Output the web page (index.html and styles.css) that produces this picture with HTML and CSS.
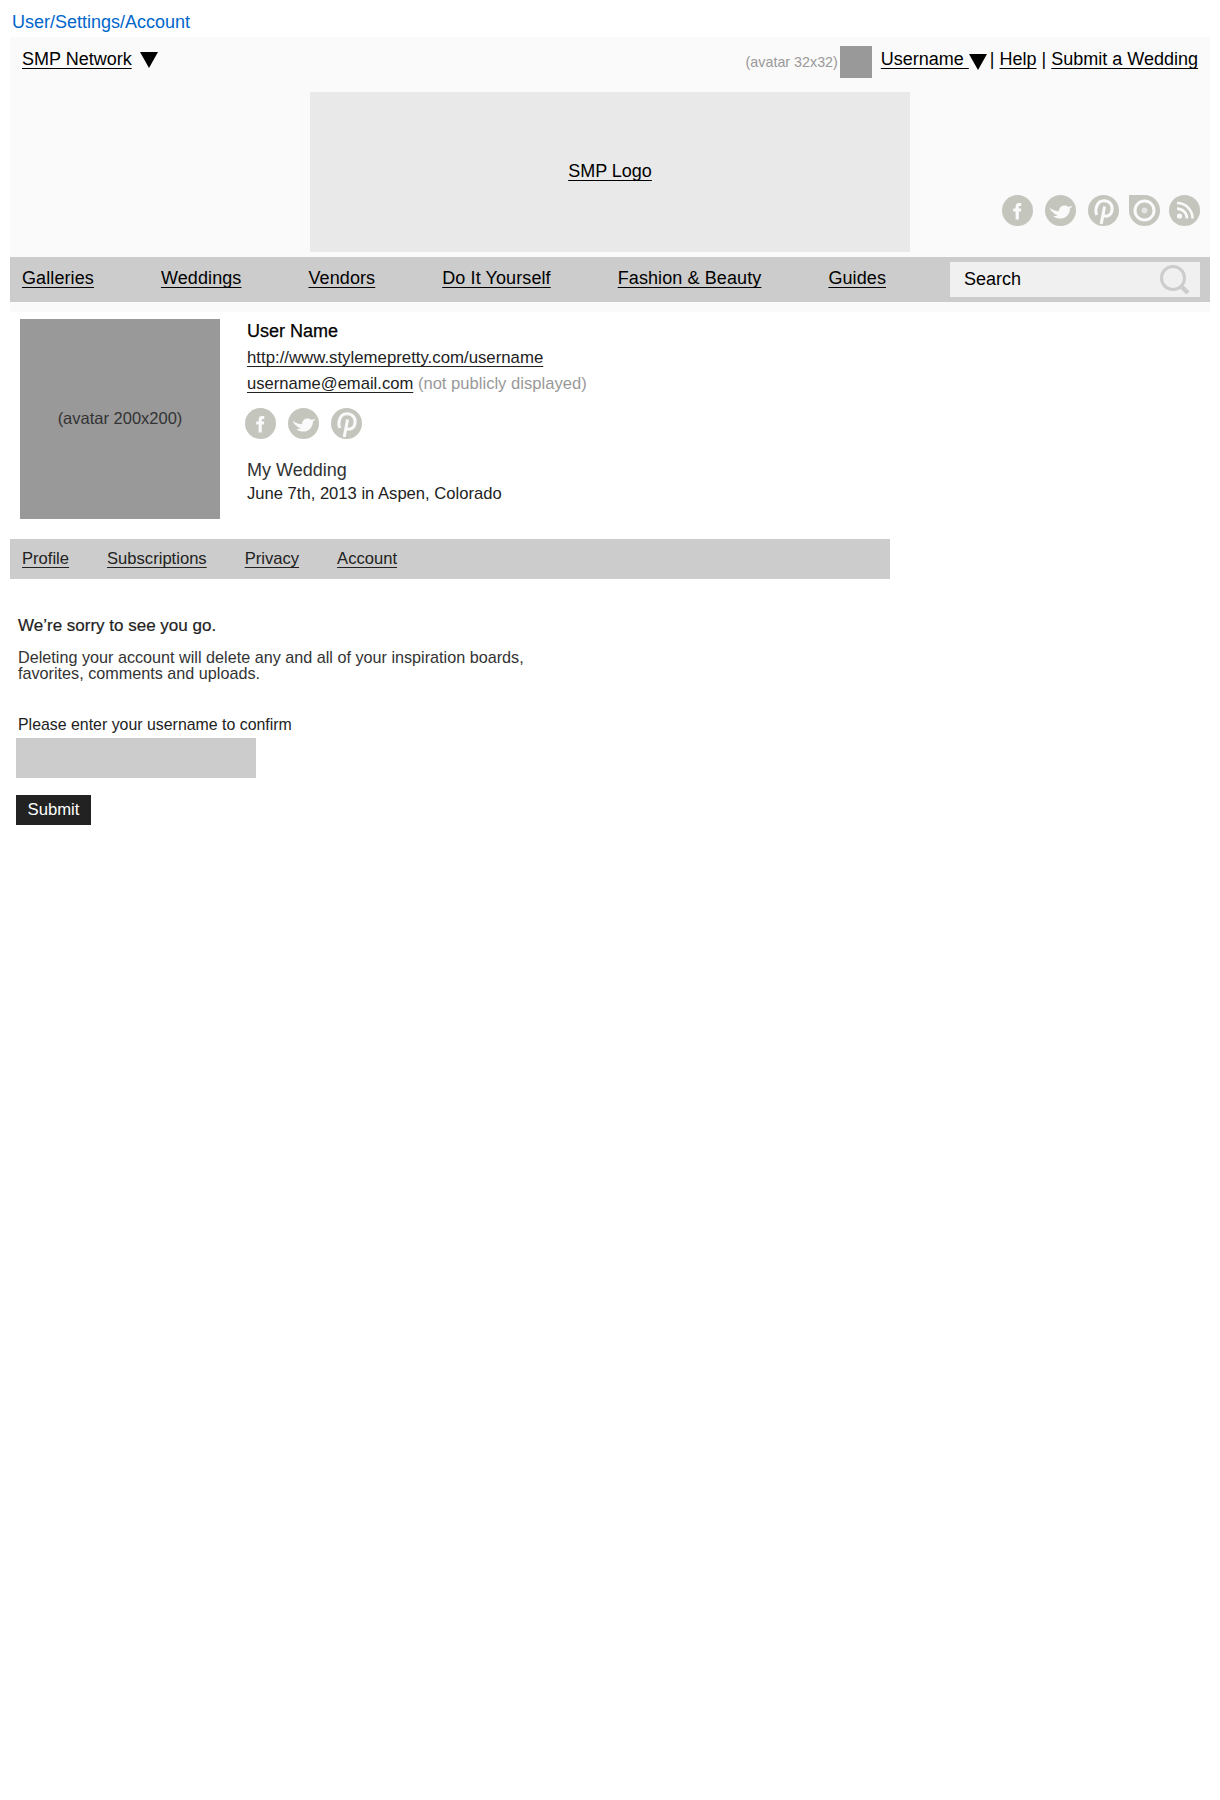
FILE: index.html
```html
<!DOCTYPE html>
<html lang="en">
<head>
    <meta charset="UTF-8">
    <meta name="viewport" content="width=device-width, initial-scale=1.0">
    <title>User/Settings/Account</title>
    <link rel="stylesheet" href="styles.css">
</head>
<body>
    <svg class="icon-defs" xmlns="http://www.w3.org/2000/svg">
        <symbol id="i-facebook" viewBox="0 0 31 31">
            <circle cx="15.5" cy="15.5" r="15.5" fill="#c4c5bd"/>
            <path fill="#fafafa" d="M13.6 24.5V16.5H11.2V13.4H13.6V11.4C13.6 9.2 15 8 17 8H19.3V11H17.9C17.1 11 16.8 11.4 16.8 12.1V13.4H19.2L18.8 16.5H16.8V24.5Z"/>
        </symbol>
        <symbol id="i-twitter" viewBox="0 0 31 31">
            <circle cx="15.5" cy="15.5" r="15.5" fill="#c4c5bd"/>
            <path fill="#fafafa" d="M4.5 12.5C7.5 15 10.5 16.2 14 16.2C14 13 16.2 10.6 19.5 10.6C21 10.6 22.2 11.1 23 11.8C24.4 11.7 25.8 11.2 27.5 10.4C26.9 11.6 26 12.6 24.9 13.4C25.2 18.6 21 23.5 15.5 23.5C12.6 23.5 10.2 22.6 8.4 21.2C10.2 21.2 11.6 20.8 12.8 20C10.6 19.8 9.2 19 8.4 17.6C6.6 16.6 5.2 14.8 4.5 12.5Z"/>
        </symbol>
        <symbol id="i-pinterest" viewBox="0 0 31 31">
            <circle cx="15.5" cy="15.5" r="15.5" fill="#c4c5bd"/>
            <path fill="none" stroke="#fafafa" stroke-width="3" d="M8.8 20C6.6 15 8.6 5.8 15.8 5.8C22.2 5.8 24.8 10.6 24 15.2C23.2 20.6 18 22.6 15 20.2"/>
            <path fill="none" stroke="#fafafa" stroke-width="3" d="M16.6 11.5L13.2 29"/>
        </symbol>
        <symbol id="i-target" viewBox="0 0 31 31">
            <path fill="#c4c5bd" d="M0 0H15.5A15.5 15.5 0 1 1 0 15.5Z"/>
            <circle cx="15.5" cy="15.5" r="9.5" fill="none" stroke="#fafafa" stroke-width="3"/>
            <circle cx="15.5" cy="15.5" r="3" fill="#fafafa" fill-opacity="0.6"/>
        </symbol>
        <symbol id="i-rss" viewBox="0 0 31 31">
            <circle cx="15.5" cy="15.5" r="15.5" fill="#c4c5bd"/>
            <circle cx="10.5" cy="21" r="2.6" fill="#fafafa"/>
            <path fill="none" stroke="#fafafa" stroke-width="2.6" d="M8 13.6A10 10 0 0 1 18 23.6M8 8A15.6 15.6 0 0 1 23.6 23.6"/>
        </symbol>
    </svg>

    <div class="crumb">User/Settings/Account</div>

    <div class="site-header">
        <div class="top-bar">
            <div class="top-left">
                <a class="link" href="#">SMP Network</a>
                <span class="caret caret-network"></span>
            </div>
            <div class="top-right">
                <span class="avatar-note">(avatar 32x32)</span>
                <span class="avatar-small"></span>
                <a class="link" href="#">Username&nbsp;</a>
                <span class="caret"></span>
                <span class="sep">|</span>
                <a class="link" href="#">Help</a>
                <span class="sep">|</span>
                <a class="link" href="#">Submit a Wedding</a>
            </div>
        </div>
        <div class="logo-row">
            <div class="logo-box"><a class="link" href="#">SMP Logo</a></div>
            <div class="social social-header">
                <svg class="social-icon"><use href="#i-facebook"/></svg>
                <svg class="social-icon"><use href="#i-twitter"/></svg>
                <svg class="social-icon"><use href="#i-pinterest"/></svg>
                <svg class="social-icon icon-target"><use href="#i-target"/></svg>
                <svg class="social-icon icon-rss"><use href="#i-rss"/></svg>
            </div>
        </div>
        <div class="main-nav">
            <nav class="main-links">
                <a class="link" href="#">Galleries</a>
                <a class="link" href="#">Weddings</a>
                <a class="link" href="#">Vendors</a>
                <a class="link" href="#">Do It Yourself</a>
                <a class="link" href="#">Fashion &amp; Beauty</a>
                <a class="link" href="#">Guides</a>
            </nav>
            <div class="search-box">
                <span>Search</span>
                <svg class="search-icon" viewBox="0 0 30 30" xmlns="http://www.w3.org/2000/svg">
                    <circle cx="13" cy="13" r="11.5" fill="none" stroke="#cccccc" stroke-width="3"/>
                    <path d="M21 21L28 28" stroke="#cccccc" stroke-width="4.5"/>
                </svg>
            </div>
        </div>
    </div>

    <div class="profile">
        <div class="avatar-large">(avatar 200x200)</div>
        <div class="profile-info">
            <div class="user-name">User Name</div>
            <div class="info-line"><a class="link" href="#">http://www.stylemepretty.com/username</a></div>
            <div class="info-line email-line"><a class="link" href="#">username@email.com</a> <span class="muted">(not publicly displayed)</span></div>
            <div class="social social-profile">
                <svg class="social-icon"><use href="#i-facebook"/></svg>
                <svg class="social-icon"><use href="#i-twitter"/></svg>
                <svg class="social-icon"><use href="#i-pinterest"/></svg>
            </div>
            <div class="wedding-title">My Wedding</div>
            <div class="wedding-info">June 7th, 2013 in Aspen, Colorado</div>
        </div>
    </div>

    <div class="tabs">
        <a class="link" href="#">Profile</a>
        <a class="link" href="#">Subscriptions</a>
        <a class="link" href="#">Privacy</a>
        <a class="link" href="#">Account</a>
    </div>

    <div class="content">
        <p class="sorry">We’re sorry to see you go.</p>
        <p class="warning">Deleting your account will delete any and all of your inspiration boards,<br>favorites, comments and uploads.</p>
        <label class="confirm-label" for="confirm-name">Please enter your username to confirm</label>
        <input class="confirm-input" id="confirm-name" type="text">
        <button class="submit-btn">Submit</button>
    </div>
</body>
</html>
```

FILE: styles.css
```css
body {
    margin: 0;
    background-color: #fff;
    color: #222;
    font-family: "Liberation Sans", Arial, sans-serif;
    font-size: 16px;
}
.icon-defs {
    display: none;
}
.link {
    color: inherit;
    text-decoration: underline;
    text-decoration-thickness: 1px;
    text-decoration-skip-ink: none;
    text-underline-offset: 3px;
}
.crumb {
    height: 37px;
    padding: 13px 0 0 12px;
    box-sizing: border-box;
    font-size: 18px;
    line-height: 18px;
    color: #0066cc;
}
.site-header {
    width: 1200px;
    margin-left: 10px;
    padding-bottom: 10px;
    background-color: #fafafa;
    color: #000;
    font-size: 18px;
}
.top-bar {
    display: flex;
    justify-content: space-between;
    height: 55px;
    padding: 9px 12px 0;
    box-sizing: border-box;
    line-height: 26px;
}
.top-left, .top-right {
    display: flex;
    align-items: flex-start;
}
.caret {
    width: 0;
    height: 0;
    margin-top: 8px;
    border-left: 9px solid transparent;
    border-right: 9px solid transparent;
    border-top: 16px solid #000;
}
.caret-network {
    margin-left: 8px;
    margin-top: 6px;
}
.avatar-note {
    margin: 3px 2px 0 0;
    color: #999;
    font-size: 14.3px;
}
.avatar-small {
    width: 32px;
    height: 32px;
    margin-right: 9px;
    background-color: #999;
}
.sep {
    margin: 0 5px 0 3px;
}
.link + .sep {
    margin-left: 5px;
}
.logo-row {
    display: grid;
    grid-template-columns: 300px 600px 300px;
    height: 160px;
    margin-bottom: 5px;
}
.logo-box {
    grid-column: 2;
    display: flex;
    justify-content: center;
    align-items: center;
    padding-bottom: 2px;
    box-sizing: border-box;
    background-color: #e9e9e9;
}
.social {
    display: flex;
    gap: 12px;
}
.social-icon {
    display: block;
    width: 31px;
    height: 31px;
}
.social-header {
    align-self: end;
    justify-content: flex-end;
    padding: 0 10px 26px 0;
}
.social-header .icon-target {
    margin-left: -2px;
}
.social-header .icon-rss {
    margin-left: -3px;
}
.main-nav {
    display: flex;
    justify-content: space-between;
    align-items: center;
    height: 45px;
    padding: 0 10px 0 12px;
    background-color: #cccccc;
}
.main-links {
    display: flex;
    gap: 67px;
    margin-bottom: 2px;
    letter-spacing: 0.1px;
}
.search-box {
    display: flex;
    justify-content: space-between;
    align-items: center;
    width: 250px;
    height: 35px;
    padding: 0 10px 0 14px;
    box-sizing: border-box;
    background-color: #f0f0f0;
}
.search-icon {
    width: 30px;
    height: 30px;
}
.profile {
    display: flex;
    gap: 27px;
    margin: 7px 0 0 20px;
}
.avatar-large {
    display: flex;
    justify-content: center;
    align-items: center;
    width: 200px;
    height: 200px;
    padding-bottom: 2px;
    box-sizing: border-box;
    background-color: #999;
    color: #333;
    font-size: 16.5px;
}
.user-name {
    color: #000;
    font-size: 18px;
    line-height: 24px;
    margin-bottom: 2px;
    -webkit-text-stroke: 0.25px #000;
}
.info-line {
    font-size: 16.8px;
    line-height: 26px;
}
.email-line {
    font-size: 16.6px;
}
.muted {
    color: #999;
}
.social-profile {
    margin: 11px 0 0 -2px;
}
.wedding-title {
    margin-top: 19px;
    font-size: 18px;
    line-height: 24px;
    color: #333;
}
.wedding-info {
    font-size: 16.6px;
    line-height: 24px;
}
.tabs {
    display: flex;
    align-items: center;
    gap: 38px;
    width: 880px;
    height: 40px;
    margin: 20px 0 0 10px;
    padding: 0 0 1px 12px;
    box-sizing: border-box;
    background-color: #cccccc;
    font-size: 16.6px;
}
.content {
    padding: 37px 0 0 16px;
}
.content p {
    margin: 0;
    padding-left: 2px;
}
.sorry {
    font-size: 17px;
    line-height: 20px;
    -webkit-text-stroke: 0.2px #222;
}
.content .warning {
    margin-top: 13px;
    font-size: 16.2px;
    line-height: 16px;
    color: #333;
}
.confirm-label {
    display: block;
    margin-top: 34px;
    padding-left: 2px;
    font-size: 15.9px;
    line-height: 20px;
}
.confirm-input {
    display: block;
    width: 240px;
    height: 40px;
    margin-top: 3px;
    border: none;
    box-sizing: border-box;
    background-color: #cccccc;
}
.submit-btn {
    display: block;
    width: 75px;
    height: 30px;
    margin-top: 17px;
    padding: 0;
    border: none;
    background-color: #222;
    color: #fff;
    font-family: inherit;
    font-size: 16.7px;
    cursor: pointer;
}
```
